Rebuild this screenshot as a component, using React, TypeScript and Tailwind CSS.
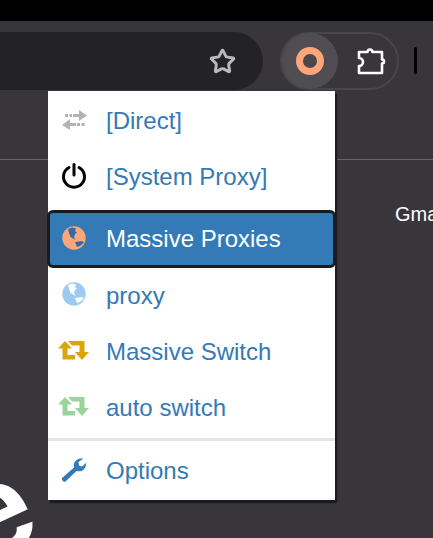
import { Star } from 'lucide-react';
import type { ReactNode } from 'react';

const font = { fontFamily: '"Liberation Sans", Arial, sans-serif' };

function TransferIcon() {
  return (
    <svg width="25" height="20" viewBox="0 0 25 20" fill="#b3b3b3" className="-mt-[3px]">
      <path d="M17 0l8 5.500-8 5.500V7H11V4h6z" />
      <rect x="3" y="4" width="3" height="3" />
      <rect x="7.500" y="4" width="2.500" height="3" />
      <path d="M8 9v4h6v3H8v4L0 15z" />
      <rect x="15" y="13" width="3" height="3" />
      <rect x="19.500" y="13" width="3" height="3" />
    </svg>
  );
}

function PowerIcon() {
  return (
    <svg width="26" height="26" viewBox="0 0 26 26" fill="none" className="-mt-[3px]">
      <path d="M8 4.500a10.500 10.500 0 1 0 10 0" stroke="#000" strokeWidth="3" strokeLinecap="round" />
      <path d="M13 1.500v10.500" stroke="#000" strokeWidth="3" strokeLinecap="round" />
    </svg>
  );
}

function GlobeIcon({ ocean, land, className }: { ocean: string; land: string; className?: string }) {
  return (
    <svg width="24" height="24" viewBox="0 0 24 24" className={className}>
      <circle cx="12" cy="12" r="11.700" fill={ocean} />
      <path d="M6 3L10 1.500L14 2.500L13 5L15 6.500L13 8L12 11L13.500 14L11 12.500L8.500 11L7 7z" fill={land} />
      <path d="M13 16L20 15L22 16.500L18 20L15 21z" fill={land} />
    </svg>
  );
}

function SwitchIcon({ color }: { color: string }) {
  return (
    <svg width="32" height="19" viewBox="0 0 32 19" fill={color} className="-mt-[3px]">
      <path d="M7 0l7 7.500H9.500V14H17v4.500H4.500V7.500H0z" />
      <path d="M10 0h16.500v11H31l-7 8-7-8h4.500V4.500H14z" />
    </svg>
  );
}

function WrenchIcon() {
  return (
    <svg width="26" height="26" viewBox="0 0 26 26" fill="#337ab7" className="-mt-[3px]">
      <path d="M1 21L13 10.500C12 6 14.500 2 20 1.500L22.500 1.500L17.500 5L18 8.500L21 9.500L25 6C25.500 11.500 21 15.500 15.500 14L4.500 24.500C3 25.500 0 23 1 21z" />
    </svg>
  );
}

function PuzzleIcon() {
  return (
    <svg width="30" height="30" viewBox="0 0 30 30" fill="none" stroke="#fff" strokeWidth="2.600" strokeLinejoin="round">
      <path d="M2 6H10.500a2.500 2.500 0 0 1 5 0H25V13.500a2 2 0 0 1 0 4V27H2V20a4 4 0 0 0 0-8z" />
    </svg>
  );
}

type RowProps = { icon: ReactNode; label: string; active?: boolean; className?: string };

function Row({ icon, label, active, className }: RowProps) {
  return (
    <div
      className={`flex items-center ${className ?? ''} ${
        active ? 'rounded-md border-[3px] border-[#191b20] bg-[#337ab7] text-white' : 'text-[#337ab7]'
      }`}
    >
      <div className={`flex shrink-0 items-center justify-center ${active ? 'mr-[8px] w-[48px]' : 'mr-[6px] w-[52px]'}`}>
        {icon}
      </div>
      <span>{label}</span>
    </div>
  );
}

export default function App() {
  return (
    <div className="relative h-[538px] w-[433px] overflow-hidden bg-[#38363a]" style={font}>
      <div className="h-[21px] bg-black" />

      {/* browser toolbar */}
      <div className="flex h-[139px] items-start border-b border-[#68666a] pt-[11px]">
        <div className="flex h-[58px] w-[263px] items-center justify-end rounded-r-[29px] bg-[#232226] pr-[27px]">
          <Star className="h-[27px] w-[27px] text-[#b9b9be]" strokeWidth={2.6} />
        </div>
        <div className="ml-[17px] flex h-[58px] w-[119px] items-center rounded-[29px] border-2 border-[#48464a]">
          <div className="flex h-[56px] w-[56px] items-center justify-center rounded-full bg-[#4f4d51]">
            <div className="h-[28px] w-[28px] rounded-full border-[7px] border-[#fda67a] bg-[#4a484c]" />
          </div>
          <div className="ml-[19px]">
            <PuzzleIcon />
          </div>
        </div>
        <div className="ml-[15px] mt-[15px] h-[27px] w-[3px] rounded-sm bg-black" />
      </div>

      {/* page behind the popup */}
      <div className="pl-[395px] pt-[42px] text-[20px] leading-[24px] text-white">Gmail</div>
      <div className="absolute left-[-42px] top-[435px] rotate-[-25deg] text-[128px] font-bold leading-[150px] text-white">e</div>

      {/* popup menu */}
      <div className="absolute left-[48px] top-[91px] flex h-[409px] w-[287px] flex-col bg-white text-[24px] shadow-[2px_3px_1px_#1c1b1e]">
        <Row icon={<TransferIcon />} label="[Direct]" className="mt-[2px] h-[56px]" />
        <Row icon={<PowerIcon />} label="[System Proxy]" className="h-[56px]" />
        <Row
          active
          icon={<GlobeIcon ocean="#fda67a" land="#2f6cad" className="-mt-[3px]" />}
          label="Massive Proxies"
          className="-ml-px mt-[5px] h-[58px] w-[289px]"
        />
        <Row icon={<GlobeIcon ocean="#9ccbf2" land="#ffffff" className="-mt-[4px]" />} label="proxy" className="h-[55px]" />
        <Row icon={<SwitchIcon color="#d9a507" />} label="Massive Switch" className="mt-[1px] h-[56px]" />
        <Row icon={<SwitchIcon color="#9bd49b" />} label="auto switch" className="h-[56px]" />
        <div className="mt-[2px] h-[3px] bg-[#e5e5e5]" />
        <Row icon={<WrenchIcon />} label="Options" className="mt-[2px] h-[56px]" />
      </div>
    </div>
  );
}
